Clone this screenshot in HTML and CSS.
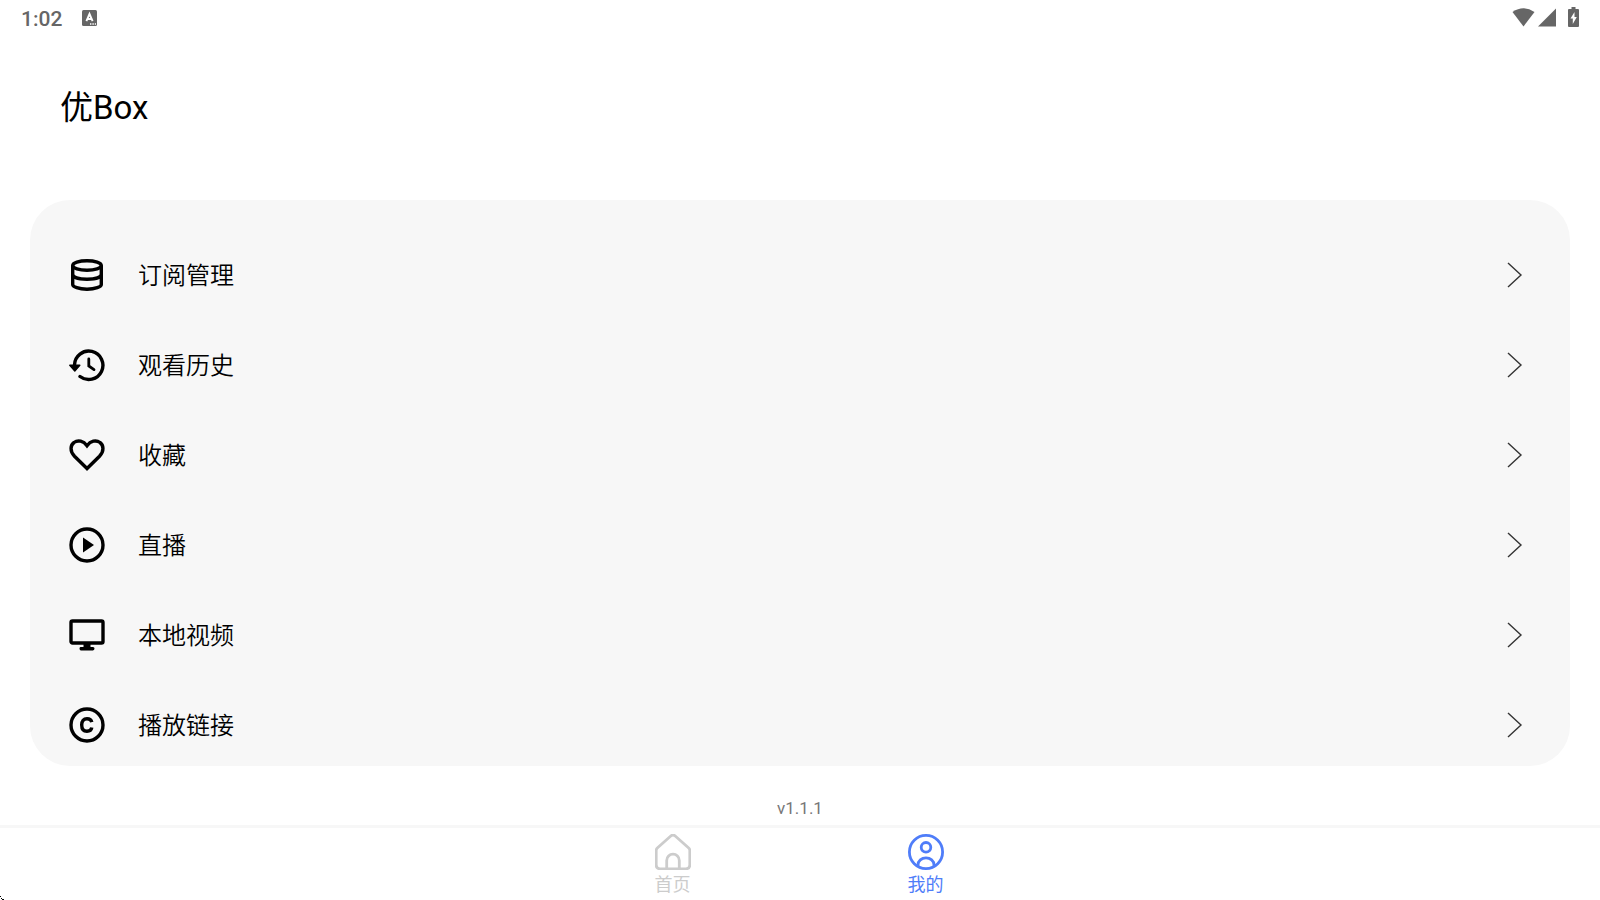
FILE: index.html
```html
<!DOCTYPE html>
<html lang="zh-CN">

<head>
    <meta charset="UTF-8">
    <meta name="viewport" content="width=device-width, initial-scale=1.0">
    <title>优Box</title>
    <link rel="stylesheet" href="styles.css">
</head>

<body>
    <header class="status-bar">
        <span class="clock">1:02</span>
        <svg class="status-input" width="16" height="16" viewBox="0 0 16 16">
            <rect width="15" height="16" rx="1.5" fill="#666" />
            <path d="M4.4 11.2L7.5 4l3.1 7.2M5.4 9h4.2" fill="none" stroke="#fff" stroke-width="1.9" />
            <path d="M8 14h1.4M10.4 14h1.4M12.8 14h1.2" stroke="#fff" stroke-width="1.3" />
        </svg>
        <div class="status-icons">
            <svg class="wifi" width="23" height="19" viewBox="0 0 23 19">
                <path d="M0.5 4Q11.5 -3.5 22.5 4L11.5 18.5z" />
            </svg>
            <svg class="signal" width="18" height="19" viewBox="0 0 18 19">
                <path d="M18 0.5v18H0z" />
            </svg>
            <svg class="battery" width="11" height="20" viewBox="0 0 11 20">
                <path d="M3.5 0h4v2H10q1 0 1 1v16q0 1-1 1H1q-1 0-1-1V3q0-1 1-1h2.500z" />
                <path d="M6.500 5L2.500 11.500h2.300v5.500l4-7H6.500z" fill="#fff" />
            </svg>
        </div>
    </header>

    <h1 class="title">优Box</h1>

    <main class="menu">
        <a class="menu-item" href="#subscribe">
            <svg class="icon" viewBox="0 0 36 36">
                <ellipse cx="18" cy="8.500" rx="14.300" ry="4.700" />
                <path d="M3.700 8.500v19c0 2.300 6 4.700 14.300 4.700s14.300-2.400 14.300-4.700v-19" />
                <path d="M3.700 17.500c0 2.800 6 4.700 14.300 4.700s14.300-1.900 14.300-4.700" />
            </svg>
            <span class="label">订阅管理</span>
            <svg class="arrow" viewBox="0 0 16 26"><path d="M1 1l13 12L1 25" /></svg>
        </a>
        <a class="menu-item" href="#history">
            <svg class="icon" viewBox="0 0 36 36">
                <path d="M5.500 18A14.200 14.200 0 1 1 11 29.500" stroke-linecap="round" />
                <path d="M19.800 12v7l5.200 3.600" stroke-width="2.800" stroke-linecap="round" />
                <path class="arrow-head" d="M0.800 18.300h10L5.800 24z" />
            </svg>
            <span class="label">观看历史</span>
            <svg class="arrow" viewBox="0 0 16 26"><path d="M1 1l13 12L1 25" /></svg>
        </a>
        <a class="menu-item" href="#favorite">
            <svg class="icon" viewBox="0 0 36 36">
                <path d="M18 31.500L5.500 19.200C0.500 14 1.500 8 5 5.500C9 2.500 14.500 4 18 8.700C21.500 4 27 2.500 31 5.500C34.500 8 35.500 14 30.500 19.200z" />
            </svg>
            <span class="label">收藏</span>
            <svg class="arrow" viewBox="0 0 16 26"><path d="M1 1l13 12L1 25" /></svg>
        </a>
        <a class="menu-item" href="#live">
            <svg class="icon" viewBox="0 0 36 36">
                <circle cx="18" cy="18" r="16" />
                <path class="solid" d="M14 10.500L25 18L14 25.500z" />
            </svg>
            <span class="label">直播</span>
            <svg class="arrow" viewBox="0 0 16 26"><path d="M1 1l13 12L1 25" /></svg>
        </a>
        <a class="menu-item" href="#local">
            <svg class="icon" viewBox="0 0 36 36">
                <rect x="2" y="4" width="32" height="22" rx="1.500" />
                <path class="solid" d="M14.500 27h7v3h2.500q1.500 0 1.500 1.500t-1.500 2h-12q-1.500 0-1.500-2t1.500-1.500h2.500z" />
            </svg>
            <span class="label">本地视频</span>
            <svg class="arrow" viewBox="0 0 16 26"><path d="M1 1l13 12L1 25" /></svg>
        </a>
        <a class="menu-item" href="#link">
            <svg class="icon" viewBox="0 0 36 36">
                <circle cx="18" cy="18" r="16" />
                <path d="M22.800 15.200C22.300 12.800 20.400 11.700 18 11.700C14.600 11.700 12.700 14 12.700 18S14.600 24.300 18 24.300C20.400 24.300 22.300 23.200 22.800 20.500" stroke-width="3.400" />
            </svg>
            <span class="label">播放链接</span>
            <svg class="arrow" viewBox="0 0 16 26"><path d="M1 1l13 12L1 25" /></svg>
        </a>
    </main>

    <p class="version">v1.1.1</p>

    <nav class="tab-bar">
        <a class="tab" href="#home">
            <svg class="tab-icon" viewBox="0 0 36 36">
                <path d="M1.200 31V16.500Q1.200 15 2.300 14L15.500 2.200Q18 0 20.500 2.200L33.700 14Q34.800 15 34.800 16.500V31Q34.800 34.800 31 34.800H5Q1.200 34.800 1.200 31z" />
                <path d="M11.700 34.500V26.500a6.300 6.300 0 0 1 12.600 0V34.500" />
            </svg>
            <span>首页</span>
        </a>
        <a class="tab active" href="#mine">
            <svg class="tab-icon" viewBox="0 0 36 36">
                <circle cx="18" cy="18" r="16.600" />
                <circle cx="18" cy="13.300" r="4.800" />
                <path d="M10 32v-1a8 7.200 0 0 1 16 0v1" />
            </svg>
            <span>我的</span>
        </a>
    </nav>

    <svg class="pointer" width="4" height="4" viewBox="0 0 4 4">
        <path d="M0 0h1v1H0zM1 2h1v1H1zM2 3h2v1H2z" />
    </svg>
</body>

</html>
```
FILE: styles.css
```css
* {
    box-sizing: border-box;
}

body {
    display: flex;
    flex-direction: column;
    height: 100vh;
    margin: 0;
    overflow: hidden;
    background: #fff;
    color: #000;
    font-family: Roboto, "Noto Sans CJK SC", sans-serif;
}

a {
    color: inherit;
    text-decoration: none;
}

.status-bar {
    display: flex;
    align-items: center;
    flex: none;
    height: 36px;
    padding: 0 21px;
    color: #666;
}

.clock {
    padding-top: 2px;
    font-size: 21px;
    font-weight: 500;
}

.status-input {
    margin-left: 20px;
}

.status-icons {
    display: flex;
    align-items: center;
    margin-left: auto;
    padding-bottom: 2px;
    fill: #666;
}

.signal {
    margin: 0 12px 0 3px;
}

.title {
    flex: none;
    margin: 0;
    padding: 47px 60px 0;
    height: 164px;
    font-size: 33px;
    font-weight: 400;
    line-height: 50px;
}

.menu {
    flex: 1;
    min-height: 0;
    margin: 0 30px;
    padding-top: 30px;
    border-radius: 40px;
    background: #f7f7f7;
    overflow: hidden;
}

.menu-item {
    display: flex;
    align-items: center;
    height: 90px;
    padding: 0 47px 0 39px;
}

.icon {
    width: 36px;
    height: 36px;
    fill: none;
    stroke: #000;
    stroke-width: 3.4;
}

.solid {
    fill: #000;
    stroke: none;
}

.arrow-head {
    fill: #000;
    stroke-width: 1.4;
    stroke-linejoin: round;
}

.label {
    flex: 1;
    margin-left: 33px;
    padding-bottom: 4px;
    font-size: 24px;
    font-weight: 350;
}

.arrow {
    width: 16px;
    height: 26px;
    fill: none;
    stroke: #333;
    stroke-width: 1.4;
}

.version {
    flex: none;
    margin: 0;
    padding-top: 30px;
    height: 59px;
    color: #777;
    font-size: 17px;
    line-height: 24px;
    text-align: center;
}

.tab-bar {
    display: flex;
    justify-content: center;
    flex: none;
    height: 75px;
    padding-right: 2px;
    border-top: 3px solid #f7f7f7;
}

.tab {
    display: flex;
    flex-direction: column;
    align-items: center;
    width: 253px;
    padding-top: 6px;
    color: #ccc;
    font-size: 18px;
    line-height: 30px;
}

.tab.active {
    color: #4f7df9;
}

.tab-icon {
    width: 36px;
    height: 36px;
    fill: none;
    stroke: currentColor;
    stroke-width: 2.8;
}

.pointer {
    position: absolute;
    left: 0;
    bottom: 0;
}
```
